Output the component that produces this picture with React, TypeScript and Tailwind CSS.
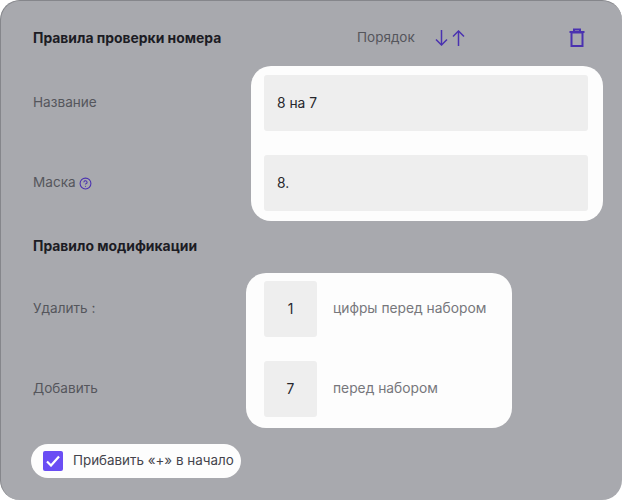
import { CircleHelp } from "lucide-react";

function TrashIcon() {
  return (
    <svg width="16" height="20" viewBox="0 0 16 20" fill="none" stroke="#4a32b0" strokeWidth="2">
      <path d="M0.5 4h15" />
      <path d="M5 3.5V1.5h6v2" />
      <rect x="2.5" y="4.5" width="11" height="13.5" />
    </svg>
  );
}

function ArrowIcon({ up }: { up?: boolean }) {
  return (
    <svg width="13" height="16" viewBox="0 0 13 16" fill="none" stroke="#4a32b0" strokeWidth="1.5" className={up ? "rotate-180" : ""}>
      <path d="M6.5 0v15" />
      <path d="M1 9.5 6.5 15 12 9.5" />
    </svg>
  );
}

export default function App() {
  return (
    <div className="w-[622px] h-[500px] bg-white font-['Inter','Noto_Sans',sans-serif]">
      <div className="h-full rounded-[20px] bg-[#a8a9ae] border-l border-t border-[#85868b] pl-[31px] pr-[18px] pt-[26px] flex flex-col">
        {/* Header */}
        <div className="flex items-center h-[22px]">
          <h2 className="w-[325px] pl-px text-[13.9px] font-bold text-[#1c1c24]">Правила проверки номера</h2>
          <span className="pb-[2px] text-[13.5px] text-[#55565c]">Порядок</span>
          <div className="flex items-center gap-[4px] ml-[20px] text-[#4a32b0]">
            <ArrowIcon />
            <ArrowIcon up />
          </div>
          <div className="ml-auto mr-[19px]">
            <TrashIcon />
          </div>
        </div>

        {/* Name and mask */}
        <div className="flex mt-[17px]">
          <div className="w-[219px] pl-px flex flex-col text-[13.6px] text-[#55565c]">
            <div className="h-[56px] mt-[9px] pb-px flex items-center">Название</div>
            <div className="h-[56px] mt-[24px] pb-px flex items-center gap-[3px]">
              Маска
              <CircleHelp size={13} strokeWidth={2} className="text-[#4a32b0] mt-[1px]" />
            </div>
          </div>
          <div className="w-[352px] h-[155px] rounded-[20px] bg-[#fdfdfd] pl-[13px] pr-[15px] pt-[9px] flex flex-col gap-[24px]">
            <div className="h-[56px] rounded-[3px] bg-[#eeeeee] pl-[13px] flex items-center text-[13.8px] text-[#26262c]">8 на 7</div>
            <div className="h-[56px] rounded-[3px] bg-[#eeeeee] pl-[13px] flex items-center text-[13.8px] text-[#26262c]">8.</div>
          </div>
        </div>

        <h2 className="mt-[17px] pl-px text-[13.9px] leading-[17px] font-bold text-[#1c1c24]">Правило модификации</h2>

        {/* Modification rule */}
        <div className="flex mt-[18px]">
          <div className="w-[214px] pl-px flex flex-col text-[13.6px] text-[#55565c]">
            <div className="h-[56px] mt-[8px] pb-px flex items-center">Удалить :</div>
            <div className="h-[56px] mt-[24px] pb-px flex items-center">Добавить</div>
          </div>
          <div className="w-[266px] h-[155px] rounded-[20px] bg-[#fdfdfd] pl-[18px] pt-[8px] flex flex-col gap-[24px]">
            <div className="flex items-center gap-[16px]">
              <div className="w-[53px] h-[56px] rounded-[3px] bg-[#eeeeee] flex items-center justify-center text-[13.8px] text-[#26262c]">1</div>
              <span className="pb-[2px] text-[13.8px] text-[#77777c]">цифры перед набором</span>
            </div>
            <div className="flex items-center gap-[16px]">
              <div className="w-[53px] h-[56px] rounded-[3px] bg-[#eeeeee] flex items-center justify-center text-[13.8px] text-[#26262c]">7</div>
              <span className="pb-[2px] text-[13.8px] text-[#77777c]">перед набором</span>
            </div>
          </div>
        </div>

        {/* Checkbox */}
        <label className="mt-[16px] -ml-px w-[210px] h-[34px] rounded-full bg-[#fdfdfd] pl-[12px] flex items-center gap-[10px] text-[13.4px] text-[#44444c]">
          <span className="w-[20px] h-[20px] rounded-[2px] bg-[#6a4df4] flex items-center justify-center">
            <svg width="14" height="12" viewBox="0 0 14 12" fill="none" stroke="#ffffff" strokeWidth="2.2">
              <path d="M1 6.5 5 10.5 13 1.5" />
            </svg>
          </span>
          <span className="pb-[2px]">Прибавить «+» в начало</span>
        </label>
      </div>
    </div>
  );
}
